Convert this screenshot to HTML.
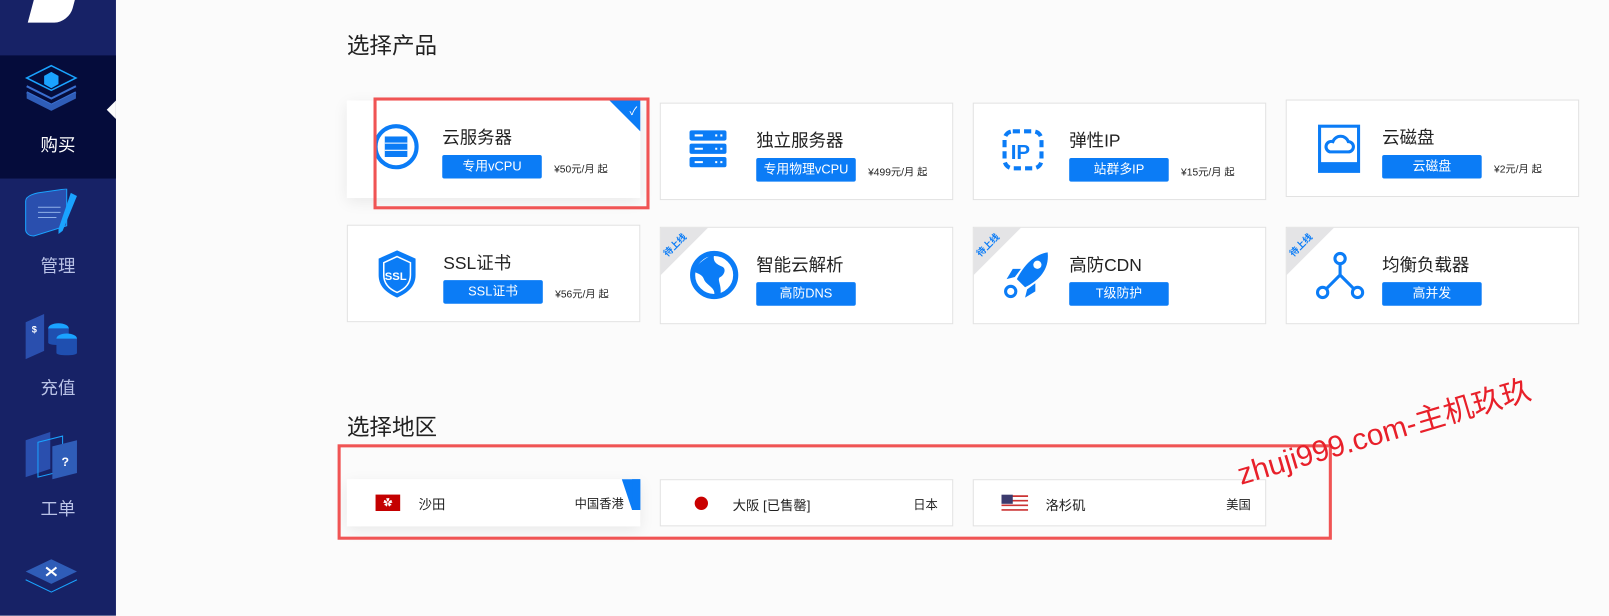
<!DOCTYPE html>
<html><head><meta charset="utf-8"><style>
*{margin:0;padding:0;box-sizing:border-box}
body{width:1609px;height:583px;overflow:hidden;background:#fbfbfb;font-family:"Liberation Sans","Noto Sans CJK SC",sans-serif;position:relative;color:#222}
#w{position:absolute;left:0;top:0;width:1568px;height:570px;transform:scale(1.0261);transform-origin:0 0}
.side{position:absolute;left:0;top:0;width:113px;height:600px;background:#172266}
.act{position:absolute;left:0;top:54px;width:113px;height:120px;background:#050c3b}
.arrow{position:absolute;left:104px;top:98px;width:0;height:0;border-top:9px solid transparent;border-bottom:9px solid transparent;border-right:9px solid #fbfbfb}
.nav{position:absolute;left:0;width:113px;text-align:center;color:#b9c2e6;font-size:17px}
.h{position:absolute;left:338px;font-size:22px;color:#222}
.card{position:absolute;background:#fff;border:1px solid #e2e2e2;width:286px;height:95px}
.card.sel{border:none;box-shadow:0 4px 14px rgba(0,0,0,.08)}
.t{position:absolute;left:93px;top:22px;font-size:17px;color:#222}
.b{position:absolute;left:93px;top:53px;width:97px;height:23px;background:#0b7cf6;color:#fff;font-size:12.5px;text-align:center;line-height:23px;border-radius:2px}
.p{position:absolute;left:202px;top:58px;font-size:10px;color:#222}
.ic{position:absolute;left:25px;top:22px}
.rib{position:absolute;left:0;top:0;width:0;height:0;border-top:46px solid #e4e4e6;border-right:46px solid transparent}
.rib span{position:absolute;left:0px;top:-36px;font-size:9px;color:#0b7cf6;transform:rotate(-45deg);font-weight:bold;white-space:nowrap}
.chk{position:absolute;right:0;top:0;width:0;height:0;border-top:30px solid #0b7cf6;border-left:30px solid transparent}
.chk i{position:absolute;right:3px;top:-28px;color:#fff;font-size:11px;font-style:normal}
.rg{position:absolute;top:467px;height:46px;width:286px;background:#fff;border:1px solid #e2e2e2;font-size:13px}
.rg .n{position:absolute;left:70px;top:14px}
.rg .c{position:absolute;right:14px;top:15px;font-size:12px}
.red{position:absolute;border:3px solid #f05454}
</style></head><body><div id="w">
<div class="side">
<div style="position:absolute;left:30px;top:0;width:40px;height:22px;background:#fff;transform:skewX(-15deg);border-radius:0 0 14px 0"></div>
<div class="act"></div>
<svg style="position:absolute;left:24px;top:62px" width="52" height="48"><path d="M26 2L50 14 26 26 2 14Z" fill="none" stroke="#1aa3ff" stroke-width="1.5"/><path d="M2 22L26 34 50 22M2 28L26 40 50 28" fill="none" stroke="#3a6fd0" stroke-width="2"/><path d="M2 28v6l24 12 24-12v-6L26 40Z" fill="#2f5db8"/><path d="M19 12l7-4 7 4v8l-7 4-7-4Z" fill="#1aa3ff"/></svg>
<div class="nav" style="top:127px;color:#fff">购买</div>
<svg style="position:absolute;left:23px;top:184px" width="54" height="50"><path d="M2 12C2 6 14 4 14 4L42 0v36L10 46C4 46 2 42 2 40Z" fill="#2a4fae" stroke="#1aa3ff"/><path d="M14 18h22M14 23h22M14 28h18" stroke="#8fb0e8"/><path d="M46 4l6 3-14 34-4 3 0-5Z" fill="#1aa3ff"/></svg>
<div class="nav" style="top:245px">管理</div>
<svg style="position:absolute;left:23px;top:306px" width="54" height="50"><path d="M2 8L20 0v36L2 44Z" fill="#2a4fae"/><text x="8" y="18" fill="#fff" font-size="9" font-weight="bold">$</text><ellipse cx="34" cy="14" rx="10" ry="5" fill="#1aa3ff"/><path d="M24 14v14c0 3 20 3 20 0V14" fill="#1f4fb0"/><ellipse cx="42" cy="24" rx="10" ry="5" fill="#1aa3ff"/><path d="M32 24v14c0 3 20 3 20 0V24" fill="#1f4fb0"/></svg>
<div class="nav" style="top:364px">充值</div>
<svg style="position:absolute;left:23px;top:421px" width="54" height="50"><path d="M2 8L26 0v36L2 44Z" fill="#2a4fae"/><path d="M14 10L38 4v34L14 44Z" fill="none" stroke="#1aa3ff"/><path d="M28 14L52 8v32L28 46Z" fill="#2f5db8"/><text x="37" y="33" fill="#fff" font-size="12" font-weight="bold">?</text></svg>
<div class="nav" style="top:482px">工单</div>
<svg style="position:absolute;left:23px;top:543px" width="54" height="40"><path d="M27 2L52 14 27 26 2 14Z" fill="#2f5db8"/><path d="M22 10l10 8M32 10l-10 8" stroke="#fff" stroke-width="2"/><path d="M2 22L27 34 52 22" fill="none" stroke="#1aa3ff"/></svg>
</div>
<div class="arrow"></div>

<div class="h" style="top:27px">选择产品</div>
<div class="h" style="top:399px">选择地区</div>

<div class="card sel" style="left:338px;top:98px"><svg class="ic" width="46" height="46"><circle cx="23" cy="23" r="20" fill="none" stroke="#0b7cf6" stroke-width="4"/><rect x="12" y="13" width="22" height="20" fill="#0b7cf6"/><path d="M12 19.5h22M12 26.5h22" stroke="#fff"/></svg><div class="t">云服务器</div><div class="b">专用vCPU</div><div class="p">¥50元/月 起</div><div class="chk"><i>✓</i></div></div>
<div class="card" style="left:643px;top:100px"><svg class="ic" width="46" height="46"><rect x="3" y="4" width="36" height="10" rx="2" fill="#0b7cf6"/><rect x="3" y="17" width="36" height="10" rx="2" fill="#0b7cf6"/><rect x="3" y="30" width="36" height="10" rx="2" fill="#0b7cf6"/><path d="M8 9h8M8 22h8M8 35h8M28 9h2M33 9h2M28 22h2M33 22h2M28 35h2M33 35h2" stroke="#fff" stroke-width="2"/></svg><div class="t">独立服务器</div><div class="b" style="width:97px">专用物理vCPU</div><div class="p">¥499元/月 起</div></div>
<div class="card" style="left:948px;top:100px"><svg class="ic" width="46" height="46"><rect x="5" y="5" width="36" height="36" rx="8" fill="none" stroke="#0b7cf6" stroke-width="4" stroke-dasharray="7 4"/><text x="11" y="32" fill="#0b7cf6" font-size="20" font-weight="bold" font-family="Liberation Sans">IP</text></svg><div class="t">弹性IP</div><div class="b">站群多IP</div><div class="p">¥15元/月 起</div></div>
<div class="card" style="left:1253px;top:97px"><svg class="ic" style="left:28px" width="46" height="50"><rect x="4" y="3" width="38" height="44" fill="none" stroke="#0b7cf6" stroke-width="3"/><rect x="4" y="38" width="38" height="9" fill="#0b7cf6"/><path d="M14 28h18a5 5 0 0 0 0-10 8 8 0 0 0-15 0 5 5 0 0 0-3 10Z" fill="none" stroke="#0b7cf6" stroke-width="3"/></svg><div class="t">云磁盘</div><div class="b">云磁盘</div><div class="p">¥2元/月 起</div></div>

<div class="card" style="left:338px;top:219px"><svg class="ic" width="46" height="50"><path d="M23 2l18 8v16c0 12-9 18-18 22C14 44 5 38 5 26V10Z" fill="#0b7cf6"/><path d="M23 8l13 6v12c0 9-6 14-13 17C16 40 10 35 10 26V14Z" fill="none" stroke="#fff" stroke-width="1.5"/><text x="11" y="31" fill="#fff" font-size="11" font-weight="bold">SSL</text></svg><div class="t">SSL证书</div><div class="b">SSL证书</div><div class="p">¥56元/月 起</div></div>
<div class="card" style="left:643px;top:221px"><div class="rib"><span>待上线</span></div><svg class="ic" style="left:28px" width="50" height="50"><circle cx="24" cy="24" r="21" fill="none" stroke="#0b7cf6" stroke-width="5"/><path d="M24 4c-2 8 4 10 8 12s2 8-2 10 2 8 0 18L24 44C26 36 16 34 14 28S4 22 4 20 12 8 24 4Z" fill="#0b7cf6"/></svg><div class="t">智能云解析</div><div class="b">高防DNS</div></div>
<div class="card" style="left:948px;top:221px"><div class="rib"><span>待上线</span></div><svg class="ic" style="left:28px" width="50" height="50"><path d="M44 2C30 4 20 16 14 28l8 8c12-6 24-16 22-34Z" fill="#0b7cf6"/><circle cx="34" cy="14" r="4" fill="#fff"/><path d="M12 26l-8 2 6-10 8 0ZM24 38l-2 8 10-6 0-8Z" fill="#0b7cf6"/><circle cx="8" cy="40" r="5" fill="none" stroke="#0b7cf6" stroke-width="3"/></svg><div class="t">高防CDN</div><div class="b">T级防护</div></div>
<div class="card" style="left:1253px;top:221px"><div class="rib"><span>待上线</span></div><svg class="ic" style="left:28px" width="50" height="50"><path d="M24 10v14L8 40M24 24l16 16" stroke="#0b7cf6" stroke-width="3" fill="none"/><circle cx="24" cy="8" r="5" fill="#fff" stroke="#0b7cf6" stroke-width="3"/><circle cx="7" cy="41" r="5" fill="#fff" stroke="#0b7cf6" stroke-width="3"/><circle cx="41" cy="41" r="5" fill="#fff" stroke="#0b7cf6" stroke-width="3"/></svg><div class="t">均衡负载器</div><div class="b">高并发</div></div>

<div class="rg" style="left:338px;border:none;box-shadow:0 4px 14px rgba(0,0,0,.08)"><div style="position:absolute;left:28px;top:15px;width:24px;height:16px;background:#c40000;color:#fff;font-size:9px;text-align:center;line-height:16px">✿</div><span class="n">沙田</span><span class="c" style="right:16px">中国香港</span><div style="position:absolute;right:0;top:0;width:0;height:0;border-top:30px solid #0b7cf6;border-left:10px solid transparent;border-right:8px solid #0b7cf6"></div></div>
<div class="rg" style="left:643px"><div style="position:absolute;left:33px;top:16px;width:13px;height:13px;border-radius:50%;background:#c90000"></div><span class="n">大阪 [已售罄]</span><span class="c">日本</span></div>
<div class="rg" style="left:948px"><svg style="position:absolute;left:27px;top:14px" width="26" height="18"><rect width="26" height="18" fill="#fff"/><path d="M0 1.5h26M0 6h26M0 10.5h26M0 15h26" stroke="#c33" stroke-width="1.6"/><rect width="11" height="9" fill="#3c3b6e"/></svg><span class="n">洛杉矶</span><span class="c">美国</span></div>

<div class="red" style="left:364px;top:95px;width:269px;height:109px"></div>
<div class="red" style="left:329px;top:433px;width:969px;height:93px"></div>
<div style="position:absolute;left:1206px;top:440px;color:#e8202a;font-size:29px;transform:rotate(-16.5deg);transform-origin:left center;white-space:nowrap;font-family:'Liberation Sans','Noto Sans CJK SC',sans-serif">zhuji999.com-主机玖玖</div>
</div></body></html>
